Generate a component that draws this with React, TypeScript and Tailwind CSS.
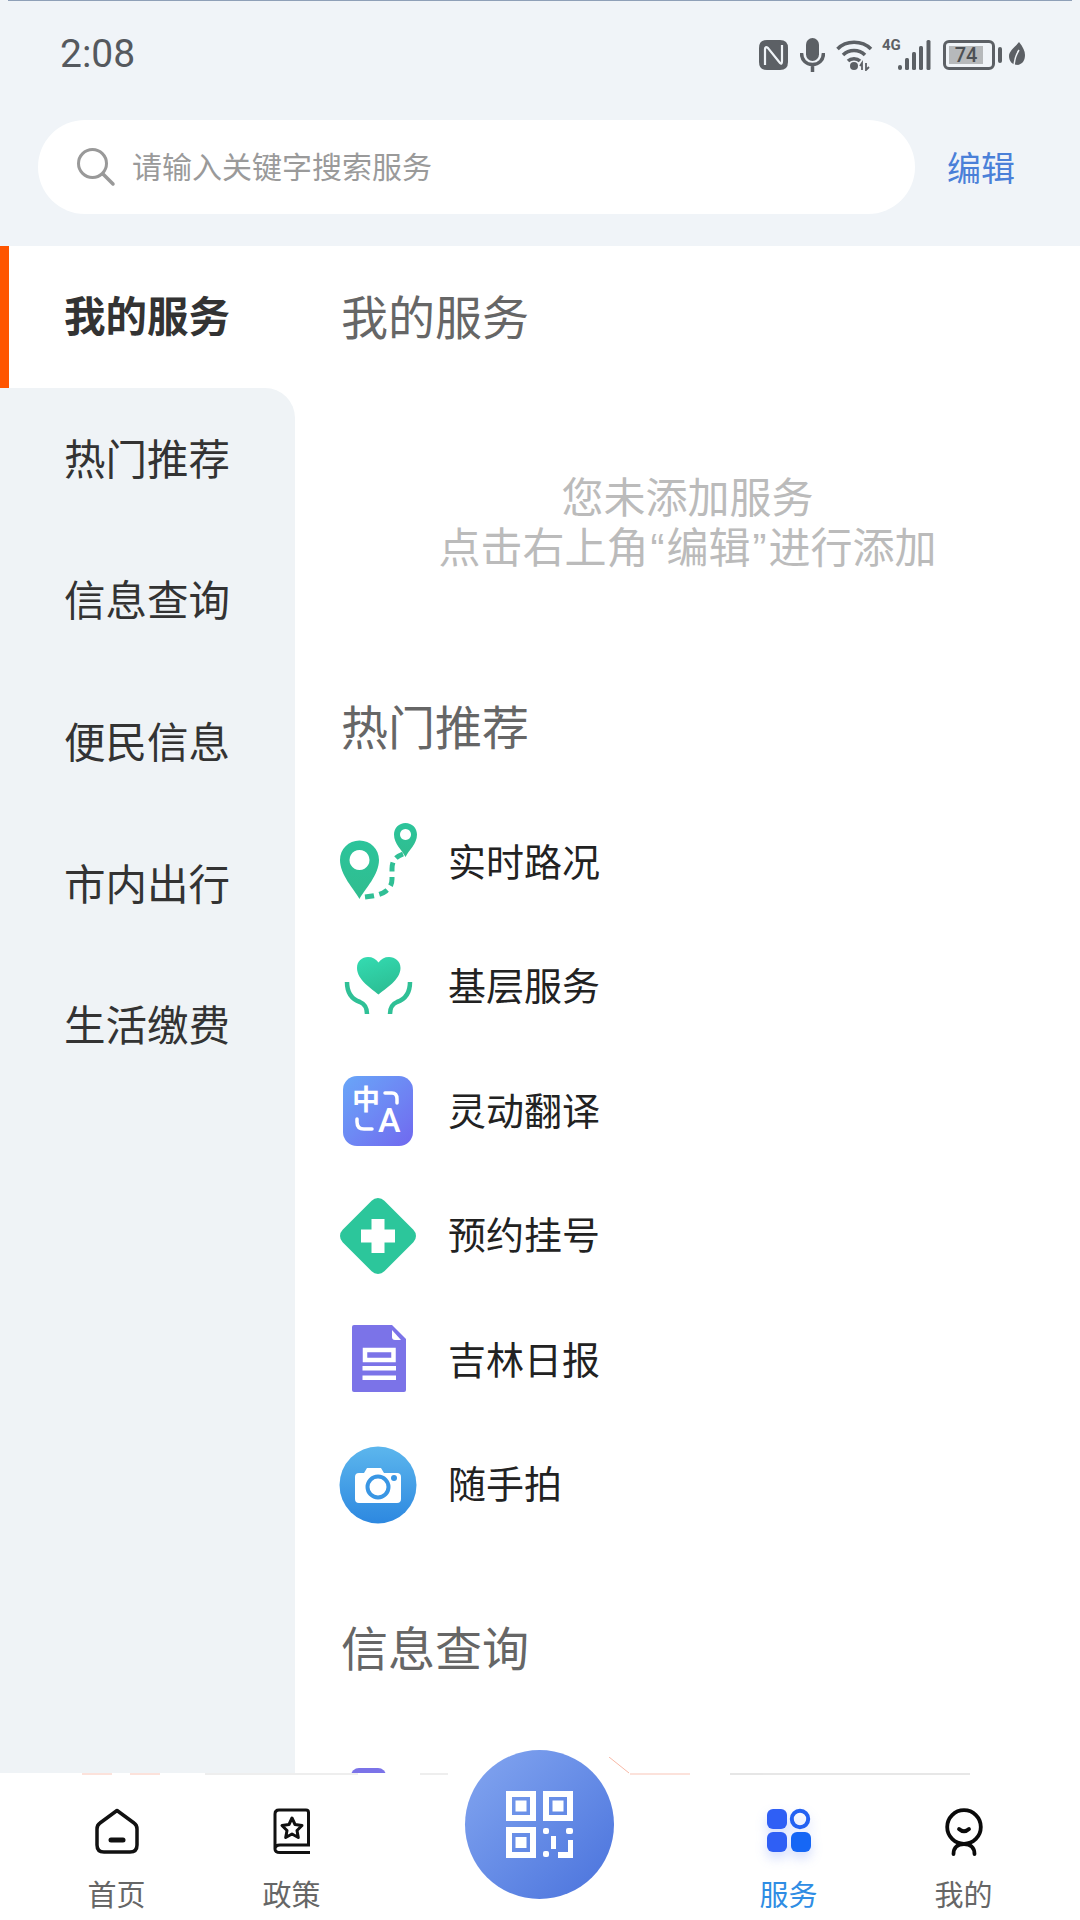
import React from 'react';

const sideItems = ['热门推荐', '信息查询', '便民信息', '市内出行', '生活缴费'];

const RouteIcon = () => (
  <svg width="78" height="78" viewBox="0 0 78 78">
    <defs>
      <linearGradient id="routeFill" x1="0" y1="0" x2="0" y2="1">
        <stop offset="0" stopColor="#2cc49b" />
        <stop offset="1" stopColor="#30bd8f" />
      </linearGradient>
    </defs>
    <path d="M26 74 C34 73 42 72 47 68 C52 64 53 60 53 56 L53 46 C53 38 56 34 64 31" fill="none" stroke="#30bf95" strokeWidth="5" strokeDasharray="9 5.5" />
    <path fillRule="evenodd" d="M20.5 76 C15 66 1 52 1 37 C1 26 9.5 17.5 20.5 17.5 C31.5 17.5 40 26 40 37 C40 52 26 66 20.5 76 Z M20.5 27 a10 10 0 1 0 0.01 0 Z" fill="url(#routeFill)" />
    <path fillRule="evenodd" d="M66.5 34 C63 27 55 21 55 11.5 C55 5 60 0 66.5 0 C73 0 78 5 78 11.5 C78 21 70 27 66.5 34 Z M66.5 6 a5.5 5.5 0 1 0 0.01 0 Z" fill="url(#routeFill)" />
  </svg>
);

const CareIcon = () => (
  <svg width="78" height="78" viewBox="0 0 78 78">
    <defs>
      <linearGradient id="heartFill" x1="0" y1="0" x2="0.4" y2="1">
        <stop offset="0" stopColor="#34dcb2" />
        <stop offset="1" stopColor="#2cbf95" />
      </linearGradient>
    </defs>
    <path d="M39.5 46.5 C33 41 18 32 18 20 C18 13 23 9 29 9 C33.5 9 37 11 39.5 14.5 C42 11 45.5 9 50 9 C56 9 61.500 13 61.500 20 C61.500 32 46 41 39.5 46.500 Z" fill="url(#heartFill)" />
    <path d="M8 34 C8 47 15 52 21 54 C26 56 28 60 28 66 M71 34 C71 47 64 52 58 54 C53 56 51 60 51 66" fill="none" stroke="#2fc096" strokeWidth="4.500" />
  </svg>
);

const TranslateIcon = () => (
  <div className="flex h-[78px] w-[78px] items-center justify-center">
    <div className="relative h-[70px] w-[70px] overflow-hidden rounded-[14px] bg-gradient-to-br from-[#68a6f8] to-[#7068ef]">
      <span className="absolute left-[9px] top-[4px] text-[28px] font-bold leading-[36px] text-white">中</span>
      <span className="absolute left-[35px] top-[23px] font-['Roboto',sans-serif] text-[34px] font-medium leading-[42px] text-white">A</span>
      <svg className="absolute left-0 top-0" width="70" height="70" viewBox="0 0 70 70">
        <path d="M42 17 H49 Q54 17 54 23 V27 M14 43 V46 Q14 53 21 53 H29" fill="none" stroke="#fff" strokeWidth="3.500" strokeLinecap="round" />
      </svg>
    </div>
  </div>
);

const ClinicIcon = () => (
  <svg width="78" height="78" viewBox="0 0 78 78">
    <rect x="9.500" y="9.500" width="59" height="59" rx="9" transform="rotate(45 39 39)" fill="#2cc69b" />
    <path d="M32.500 22 H45.500 V32.500 H56 V45.500 H45.500 V56 H32.500 V45.500 H22 V32.500 H32.500 Z" fill="#fff" />
  </svg>
);

const PaperIcon = () => (
  <svg width="78" height="78" viewBox="0 0 78 78">
    <path d="M15 4 H53 L67 18 V69 Q67 71 65 71 H15 Q13 71 13 69 V6 Q13 4 15 4 Z" fill="#7b73e8" />
    <path d="M53 9 L62 19 H56 Q53 19 53 16 Z" fill="#fff" />
    <rect x="26" y="29" width="28.500" height="10" fill="none" stroke="#fff" strokeWidth="4.500" />
    <rect x="23.500" y="45" width="33.500" height="4.500" fill="#fff" />
    <rect x="23.500" y="54.500" width="33.500" height="4.500" fill="#fff" />
  </svg>
);

const CameraIcon = () => (
  <svg width="78" height="78" viewBox="0 0 78 78">
    <defs>
      <linearGradient id="camFill" x1="0" y1="0" x2="0" y2="1">
        <stop offset="0" stopColor="#5cb6ed" />
        <stop offset="1" stopColor="#2d88e0" />
      </linearGradient>
    </defs>
    <circle cx="39" cy="39" r="38.500" fill="url(#camFill)" />
    <path d="M20 27 H25 L28 22 H42 L45 27 H58 Q62 27 62 31 V53 Q62 57 58 57 H20 Q16 57 16 53 V31 Q16 27 20 27 Z" fill="#fff" />
    <circle cx="39" cy="41" r="10.500" fill="#fff" stroke="#3996e4" strokeWidth="4" />
    <circle cx="55" cy="32" r="3" fill="#3996e4" />
  </svg>
);

const hotItems: { name: string; icon: React.ReactNode }[] = [
  { name: '实时路况', icon: <RouteIcon /> },
  { name: '基层服务', icon: <CareIcon /> },
  { name: '灵动翻译', icon: <TranslateIcon /> },
  { name: '预约挂号', icon: <ClinicIcon /> },
  { name: '吉林日报', icon: <PaperIcon /> },
  { name: '随手拍', icon: <CameraIcon /> },
];

const StatusIcons = () => (
  <div className="flex items-center text-[#5c6065]">
    <svg width="29" height="30" viewBox="0 0 29 30">
      <path d="M8 0 H21 Q29 0 29 8 V22 Q29 30 21 30 H8 Q0 30 0 22 V8 Q0 0 8 0 Z" fill="#5c6065" />
      <path d="M6 25 V9 Q6 6 9 8 L21 23 Q23 25 23 21 V5" fill="none" stroke="#eff3f7" strokeWidth="2.200" />
    </svg>
    <svg className="ml-[12px]" width="25" height="34" viewBox="0 0 25 34">
      <rect x="6" y="0" width="13" height="23" rx="6.500" fill="#5c6065" />
      <path d="M1.500 15 C1.500 22 6 26.500 12.500 26.500 C19 26.500 23.500 22 23.500 15 M12.500 26 V34" fill="none" stroke="#5c6065" strokeWidth="3.500" />
    </svg>
    <svg className="ml-[11px]" width="37" height="32" viewBox="0 0 37 32">
      <path d="M1.500 10 C10 1 26 1 35 10 M7 16 C13 10 23 10 29 16 M12 22 C15 19 21 19 24 22" fill="none" stroke="#5c6065" strokeWidth="3.500" />
      <circle cx="18" cy="27" r="4" fill="#5c6065" />
      <path d="M26 31 V24 L24 27 M30 24 V31 L33 28" fill="none" stroke="#5c6065" strokeWidth="1.800" />
    </svg>
    <div className="relative ml-[9px] h-[32px] w-[49px]">
      <span className="absolute left-0 top-[-3px] font-['Roboto',sans-serif] text-[15px] font-bold leading-[18px]">4G</span>
      <svg className="absolute left-0 top-0" width="49" height="32" viewBox="0 0 49 32">
        <rect x="16" y="26" width="4" height="5" rx="2" fill="#5c6065" />
        <rect x="23" y="19" width="4" height="12" rx="1.500" fill="#5c6065" />
        <rect x="30" y="13" width="4" height="18" rx="1.500" fill="#5c6065" />
        <rect x="37" y="7" width="4" height="24" rx="1.500" fill="#5c6065" />
        <rect x="44.500" y="1" width="4" height="30" rx="1.500" fill="#5c6065" />
      </svg>
    </div>
    <div className="ml-[12px] flex h-[30px] w-[52px] items-center rounded-[6px] border-[3px] border-[#5c6065] p-[3px]">
      <div className="flex h-full w-[34px] items-center justify-center bg-[#b6b9bb] font-['Roboto',sans-serif] text-[20px] font-medium leading-none text-[#4c5054]">74</div>
    </div>
    <div className="ml-[3px] h-[16px] w-[4px] rounded-full bg-[#5c6065]" />
    <svg className="ml-[7px]" width="16" height="26" viewBox="0 0 16 26">
      <path d="M10 0 C14 5 16 9 16 13 C16 19 13 22 9 23 C3 23 0 19 0 14 C0 9 6 5 10 0 Z" fill="#5c6065" />
      <path d="M5 26 C5 20 6 14 10 8" fill="none" stroke="#eff3f7" strokeWidth="1.500" />
    </svg>
  </div>
);

const HomeIcon = () => (
  <svg width="44" height="46" viewBox="0 0 44 46">
    <path d="M22 2.500 L39 15 Q42 17 42 21 V37 Q42 44 35 44 H9 Q2 44 2 37 V21 Q2 17 5 15 Z" fill="none" stroke="#111" strokeWidth="3.500" strokeLinejoin="round" />
    <rect x="13.500" y="29.500" width="17" height="5" rx="2.500" fill="#111" />
  </svg>
);

const BookIcon = () => (
  <svg width="38" height="46" viewBox="0 0 38 46">
    <path d="M6 2 H33 Q35.500 2 35.500 4.500 V37 H7 Q2 37 2 41 V6 Q2 2 6 2 Z M2 41 Q2 44.500 7 44.500 H37" fill="none" stroke="#111" strokeWidth="3" />
    <path d="M19 10 L22 16.500 L29 17.500 L24 22.500 L25.300 29.500 L19 26 L12.700 29.500 L14 22.500 L9 17.500 L16 16.500 Z" fill="none" stroke="#111" strokeWidth="3" strokeLinejoin="round" />
  </svg>
);

const ServiceIcon = () => (
  <svg className="drop-shadow-[0_6px_6px_rgba(60,100,240,0.22)]" width="44" height="46" viewBox="0 0 44 46">
    <rect x="0" y="1" width="20" height="20" rx="6" fill="#2f5ff5" />
    <circle cx="33" cy="11" r="8.200" fill="none" stroke="#2462f2" strokeWidth="4" />
    <rect x="0" y="24" width="20" height="20" rx="6" fill="#2f5ff5" />
    <rect x="24" y="24" width="20" height="20" rx="6" fill="#1667f5" />
  </svg>
);

const MeIcon = () => (
  <svg width="38" height="48" viewBox="0 0 38 48">
    <circle cx="19" cy="19" r="16.800" fill="none" stroke="#0a0a0a" strokeWidth="3.800" />
    <path d="M14 21 Q19 25.500 24 21" fill="none" stroke="#0a0a0a" strokeWidth="3.800" strokeLinecap="round" />
    <path d="M8.500 46 C8.500 39 13 36 19 36 C25 36 29.500 39 29.500 46" fill="none" stroke="#0a0a0a" strokeWidth="3.800" strokeLinecap="round" />
  </svg>
);

const QrIcon = () => (
  <svg width="67" height="67" viewBox="0 0 67 67" fill="#fff">
    <path fillRule="evenodd" d="M0 0 H30 V30 H0 Z M6 6 V24 H24 V6 Z M9.500 9.500 H20.500 V20.500 H9.500 Z" />
    <path fillRule="evenodd" d="M37 0 H67 V30 H37 Z M43 6 V24 H61 V6 Z M46.500 9.500 H57.500 V20.500 H46.500 Z" />
    <path fillRule="evenodd" d="M0 36 H30 V67 H0 Z M6 42 V61 H24 V42 Z M9.500 46 H20.500 V57 H9.500 Z" />
    <rect x="37" y="37" width="6" height="6" rx="2" />
    <rect x="60" y="37" width="7" height="6" rx="2" />
    <rect x="45" y="45" width="5" height="13" />
    <rect x="37" y="60" width="6" height="6" rx="2" />
    <path d="M62 49 H67 V67 H52 V61 H62 Z" />
  </svg>
);

const NavItem = ({ label, active, children }: { label: string; active?: boolean; children: React.ReactNode }) => (
  <div className="flex w-[175px] flex-col items-center">
    <div className="flex h-[48px] items-start justify-center">{children}</div>
    <span className={`mt-[19px] text-[29px] leading-[36px] ${active ? 'text-[#2f8de4]' : 'text-[#666666]'}`}>{label}</span>
  </div>
);

const SectionTitle = ({ children, className = '' }: { children: React.ReactNode; className?: string }) => (
  <div className={`flex h-[142px] items-center pb-[5px] text-[47px] leading-none text-[#666666] ${className}`}>{children}</div>
);

export default function App() {
  return (
    <div className="relative flex h-[1920px] w-[1080px] flex-col overflow-hidden bg-[#f0f4f8] font-['Noto_Sans_CJK_SC','Noto_Sans',sans-serif]">
      <div className="mx-[8px] h-[1px] bg-[#8fa0b8]" />
      <div className="flex h-[107px] items-center justify-between pl-[60px] pr-[55px]">
        <span className="font-['Roboto',sans-serif] text-[39px] leading-none text-[#55595e]">2:08</span>
        <StatusIcons />
      </div>

      <div className="flex items-center pl-[38px] pt-[12px]">
        <div className="flex h-[94px] w-[877px] items-center rounded-full bg-white pl-[38px]">
          <svg width="40" height="40" viewBox="0 0 40 40">
            <circle cx="16.500" cy="16.500" r="14" fill="none" stroke="#999999" strokeWidth="3" />
            <path d="M27 27 L37 37" stroke="#999999" strokeWidth="3.500" strokeLinecap="round" />
          </svg>
          <span className="ml-[16px] pb-[4px] text-[30px] leading-none text-[#9a9a9a]">请输入关键字搜索服务</span>
        </div>
        <span className="ml-[32px] text-[34px] leading-none text-[#4a80d8]">编辑</span>
      </div>

      <div className="mt-[32px] flex min-h-0 flex-1 bg-white">
        <aside className="flex w-[295px] flex-col">
          <div className="flex h-[142px] items-center">
            <div className="h-full w-[9px] bg-[#ff5500]" />
            <span className="ml-[55px] pb-[5px] text-[41.5px] font-bold leading-none text-[#333333]">我的服务</span>
          </div>
          <div className="flex-1 rounded-tr-[30px] bg-[#eff3f6]">
            {sideItems.map(item => (
              <div key={item} className="flex h-[141.7px] items-center pb-[3px] pl-[64px] text-[41.5px] leading-none text-[#333333]">{item}</div>
            ))}
          </div>
        </aside>

        <main className="min-w-0 flex-1 overflow-hidden pl-[46px]">
          <SectionTitle>我的服务</SectionTitle>
          <div className="-ml-[46px] mt-[82px] text-center text-[42px] leading-[50px] text-[#bbbbbb]">
            <p>您未添加服务</p>
            <p>点击右上角<span className="mx-[2px] font-['Liberation_Sans',sans-serif]">“</span>编辑<span className="mx-[2px] font-['Liberation_Sans',sans-serif]">”</span>进行添加</p>
          </div>
          <SectionTitle className="mt-[82px]">热门推荐</SectionTitle>
          <div className="mt-[2px]">
            {hotItems.map(item => (
              <div key={item.name} className="flex h-[124.5px] items-center">
                <div className="-ml-[2px] h-[78px] w-[78px] shrink-0">{item.icon}</div>
                <span className="ml-[31px] pb-[5px] text-[38px] leading-none text-[#222222]">{item.name}</span>
              </div>
            ))}
          </div>
          <SectionTitle className="mt-[30px]">信息查询</SectionTitle>
          <div className="mt-[49px] flex items-start pl-[10px]">
            <div className="h-[40px] w-[35px] rounded-[8px] bg-[#7b73e8]" />
          </div>
        </main>
      </div>

      <nav className="h-[147px] bg-white">
        <div className="flex h-[2px] opacity-30">
          <span className="ml-[82px] w-[30px] bg-[#f7a08c]" />
          <span className="ml-[18px] w-[30px] bg-[#f7a08c]" />
          <span className="ml-[45px] w-[153px] bg-[#c8c8c8]" />
          <span className="ml-[62px] w-[28px] bg-[#c8c8c8]" />
          <span className="ml-[182px] w-[60px] bg-[#f7a08c]" />
          <span className="ml-[40px] w-[240px] bg-[#b0b0b0]" />
        </div>
        <div className="flex justify-between px-[29px] pt-[33px]">
          <div className="flex">
            <NavItem label="首页"><HomeIcon /></NavItem>
            <NavItem label="政策"><BookIcon /></NavItem>
          </div>
          <div className="flex">
            <NavItem label="服务" active><ServiceIcon /></NavItem>
            <NavItem label="我的"><MeIcon /></NavItem>
          </div>
        </div>
      </nav>

      <svg className="absolute left-[609px] top-[1757px]" width="21" height="17" viewBox="0 0 21 17">
        <path d="M0 0 L20 16" stroke="#f7b8a6" strokeWidth="1" />
      </svg>
      <div className="absolute left-[465px] top-[1750px] flex h-[149px] w-[149px] items-center justify-center rounded-full bg-gradient-to-br from-[#84a6f0] to-[#4a72dc]">
        <QrIcon />
      </div>
    </div>
  );
}
